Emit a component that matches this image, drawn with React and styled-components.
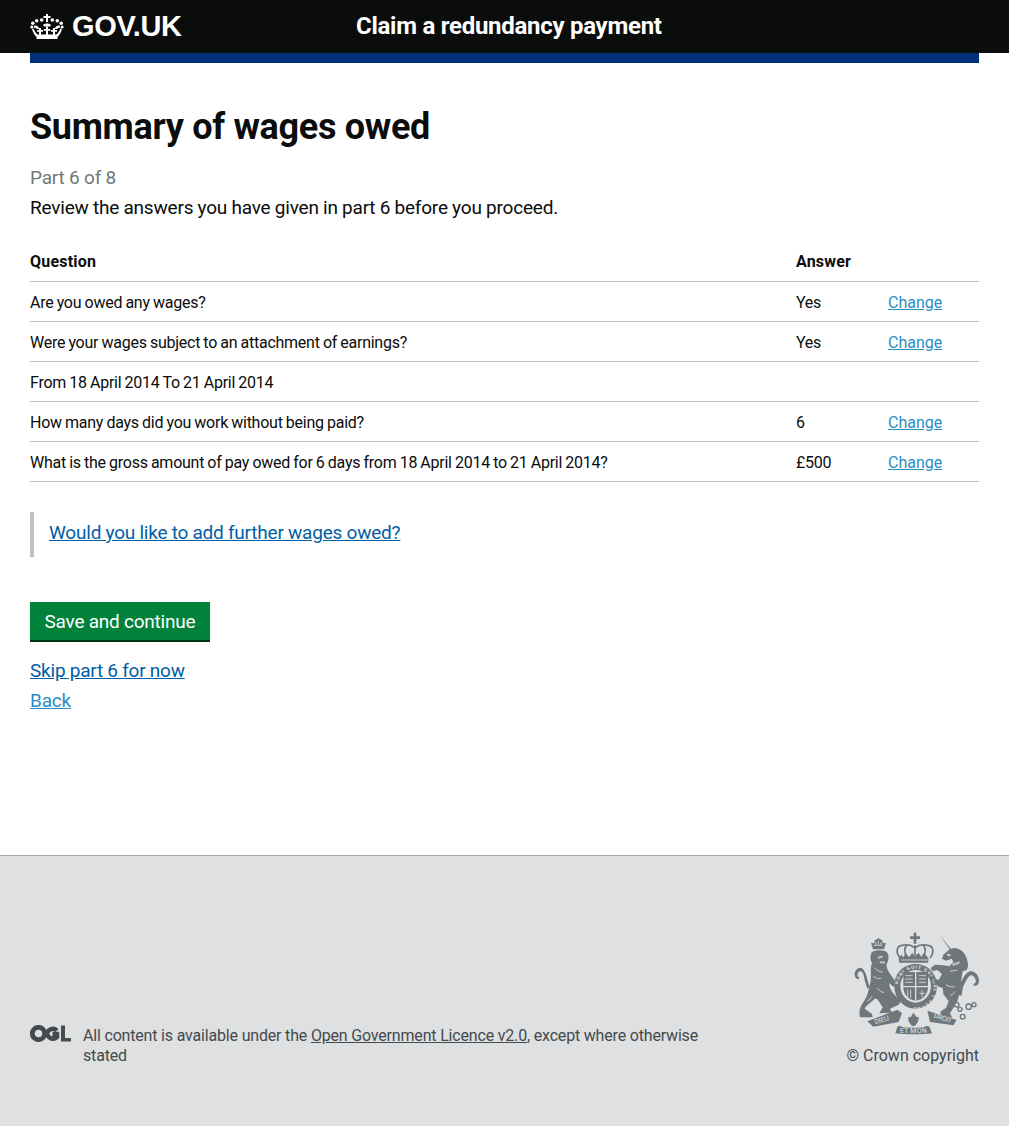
import React from 'react';
import styled, { createGlobalStyle } from 'styled-components';

const GlobalStyle = createGlobalStyle`
	html, body {
		margin: 0;
		padding: 0;
		background: #fff;
		color: #0b0c0c;
		font-family: Roboto, Arial, sans-serif;
	}
`;

const Page = styled.div`
	display: flex;
	flex-direction: column;
	height: 1126px;
`;

const Header = styled.header`
	display: flex;
	align-items: center;
	height: 53px;
	padding: 0 30px;
	background: #0b0c0c;
	color: #fff;
`;

const Logo = styled.div`
	display: flex;
	align-items: center;
	gap: 8px;
	width: 326px;
	font-family: "Liberation Sans", Arial, sans-serif;
	font-size: 29px;
	font-weight: 700;
	letter-spacing: -0.35px;
`;

const ServiceName = styled.div`
	margin-top: -2px;
	font-size: 24px;
	font-weight: 700;
	letter-spacing: -0.27px;
`;

const Main = styled.main`
	flex: 1;
	padding: 0 30px;
`;

const BlueBar = styled.div`
	height: 10px;
	background: #003078;
`;

const Title = styled.h1`
	margin: 42px 0 0;
	font-size: 36px;
	line-height: 45px;
	font-weight: 700;
	letter-spacing: -0.3px;
`;

const Part = styled.p`
	margin: 13px 0 0;
	font-size: 19px;
	line-height: 30px;
	color: #6f777b;
	letter-spacing: -0.2px;
`;

const Lede = styled.p`
	margin: 0;
	font-size: 19px;
	line-height: 30px;
	letter-spacing: -0.2px;
	word-spacing: -0.2px;
`;

const Table = styled.div`
	margin-top: 19px;
`;

const Row = styled.div`
	display: grid;
	grid-template-columns: 766px 92px 1fr;
	align-items: center;
	height: 40px;
	box-sizing: border-box;
	padding-top: 2px;
	border-bottom: 1px solid #bfc1c3;
	font-size: 16px;
	letter-spacing: -0.25px;
	word-spacing: -0.5px;
`;

const HeadRow = styled(Row)`
	padding-top: 0;
	font-weight: 700;
	letter-spacing: 0.2px;
`;

const ChangeLink = styled.a`
	color: #2b8cc4;
	text-decoration: underline;
	letter-spacing: 0;
`;

const Inset = styled.div`
	margin-top: 30px;
	padding: 5px 0 5px 15px;
	height: 35px;
	line-height: 31px;
	border-left: 4px solid #bfc1c3;
	font-size: 19px;
	letter-spacing: -0.2px;
	word-spacing: -0.2px;
`;

const PlainLink = styled.a`
	color: ${p => (p.$visited ? '#2b8cc4' : '#005ea5')};
	text-decoration: underline;
`;

const SaveButton = styled.button`
	display: block;
	margin-top: 45px;
	width: 180px;
	height: 40px;
	padding: 0;
	border: 0;
	border-bottom: 2px solid #003618;
	background: #00823b;
	color: #fff;
	font-family: inherit;
	font-size: 19px;
	letter-spacing: -0.2px;
	word-spacing: -0.2px;
`;

const LinkLine = styled.div`
	font-size: 19px;
	line-height: 30px;
	letter-spacing: -0.2px;
	word-spacing: -0.2px;
	margin-top: ${p => p.$gap || 0}px;
`;

const Footer = styled.footer`
	display: flex;
	justify-content: space-between;
	align-items: flex-end;
	height: 271px;
	box-sizing: border-box;
	padding: 0 30px 60px;
	background: #dee0e2;
	border-top: 1px solid #a1acb2;
	color: #454a4c;
	font-size: 16px;
	line-height: 20px;
`;

const Licence = styled.div`
	display: flex;
	gap: 12px;
	width: 690px;
	letter-spacing: -0.18px;
	svg {
		margin-top: -1px;
	}
`;

const LicenceText = styled.div`
	flex: 1;
	a {
		color: #454a4c;
		text-decoration: underline;
	}
`;

const Copyright = styled.div`
	display: flex;
	flex-direction: column;
	align-items: flex-end;
	gap: 11px;
`;

const CrestLabel = styled.text`
	font-family: Roboto, Arial, sans-serif;
	font-size: 21px;
	fill: #dee0e2;
`;

const RingLabel = styled.text`
	font-family: Roboto, Arial, sans-serif;
	font-size: 14px;
	font-weight: 700;
	fill: #dee0e2;
`;

const CrownIcon = () => (
	<svg width="34" height="25" viewBox="0 0 34 25" fill="#fff" aria-hidden="true">
		<path d="M16 0h2v2h2.500v2H18v4h-2V4h-2.500V2H16z" />
		<circle cx="2.800" cy="9.300" r="1.800" /><circle cx="1.800" cy="13" r="1.500" /><circle cx="6.700" cy="6.700" r="1.800" /><circle cx="11.700" cy="6" r="1.800" />
		<circle cx="31.200" cy="9.300" r="1.800" /><circle cx="32.200" cy="13" r="1.500" /><circle cx="27.300" cy="6.700" r="1.800" /><circle cx="22.300" cy="6" r="1.800" />
		<path d="M4 12c2-1 4 0 5 2l-.5 1-1.500 0C6 14 5 13.500 4 14zM30 12c-2-1-4 0-5 2l.5 1 1.500 0c1-1 2-1.500 3-1zM13 11c2-2 6-2 8 0l-1 1.500h-6z" />
		<path d="M2 15l1.500-.5C5 18 6.500 19.500 7.500 20.500L26.500 20.500C27.500 19.500 29 18 30.500 14.500L32 15c-1 4-3 6.500-4.500 8h-21C5 21.500 3 19 2 15z" />
		<path d="M6.500 23h21v2h-21z" />
		<path d="M9 14h2v2h2v1.700h-2V21H9v-3.300H7V16h2zM16 12.500h2V15h2.300v1.700H18V21h-2v-4.300h-2.300V15H16zM23 14h2v2h2v1.700h-2V21h-2v-3.300h-2V16h2z" />
	</svg>
);

const OglLogo = () => (
	<svg width="41" height="17" viewBox="0 0 41 17" aria-hidden="true">
		<circle cx="8.500" cy="8.500" r="6.200" fill="none" stroke="#454a4c" strokeWidth="4.800" />
		<path d="M27 5.500A6 6 0 0 0 17 8.500a6 6 0 0 0 10 3.500V9h-4.500" fill="none" stroke="#454a4c" strokeWidth="4.500" />
		<path d="M31 0.500h4v12.500h6v3.500H31z" fill="#454a4c" />
	</svg>
);

// traced by eye from the footer crest, coordinates are reference pixels x3
const Crest = () => (
	<svg width="125" height="103" viewBox="42 32 375 309" fill="#6f777b" aria-hidden="true">
		{/* lion crown */}
		<path d="M99 84l-6-20 9 2 3-10 9-4 1-5 2 5 9 4 3 10 9-2-6 20z" />
		<path d="M101 72h26M106 62l2 8M115 58v12M124 62l-2 8" stroke="#dee0e2" strokeWidth="2.500" />
		{/* lion */}
		<path d="M96 92C110 84 135 86 142 94 148 104 146 118 140 128 138 140 146 150 152 160L172 188 160 196 148 186C146 200 160 222 184 238L176 250 150 262 156 274 118 276 128 258C116 240 112 230 104 232 92 244 76 254 74 262L96 278 98 288 60 288C56 270 60 256 72 240 84 222 86 204 92 180 94 160 90 140 96 126 90 114 90 100 96 92z" />
		<path d="M114 108l12-4 1 3-12 4zM120 122h14v2.500h-14zM104 140c8 8 16 12 24 12M100 165c8 6 16 8 24 6M112 200c6 8 12 12 20 14M96 225c-4 6-8 10-14 16" fill="none" stroke="#dee0e2" strokeWidth="2.500" />
		{/* lion tail */}
		<path d="M90 196C80 180 82 156 68 142 58 134 44 146 44 160c0 8 6 14 12 14l2-6c-6-2-8-10-2-16 8-6 14 2 16 14 2 12 6 24 10 36z" />
		{/* royal crown */}
		<path d="M221 34h8v11h11v8h-11v14h-8V53h-11v-8h11z" />
		<path d="M180 110C166 92 170 74 186 72 202 68 216 72 225 80 234 72 248 68 264 72 280 74 284 92 270 110M225 72V104M200 72C192 82 194 96 200 106M250 72C258 82 256 96 250 106" fill="none" stroke="#6f777b" strokeWidth="5" />
		<path d="M178 124l-2-14 8-10 6 8 8-12 9 12 10-14 8 12 10-12 9 12 8-12 6 8 8 10-2 12z" />
		<path d="M184 116h82" stroke="#dee0e2" strokeWidth="2.500" />
		{/* garter ring */}
		<path fillRule="evenodd" d="M227 128c36 0 64 28 64 66s-28 68-64 68-64-30-64-68 28-66 64-66zM227 146c-25 0-46 21-46 48s21 50 46 50 46-23 46-50-21-48-46-48z" />
		<path id="garter" d="M173 200A54 58 0 1 1 281 200A54 58 0 1 1 173 200" fill="none" />
		<RingLabel letterSpacing="3"><textPath href="#garter" startOffset="3%">HONI SOIT QUI MAL Y PENSE</textPath></RingLabel>
		{/* shield */}
		<path d="M190 152h35v42h-35zM229 152h35v42h-35zM190 198h35v40c-20-2-35-20-35-40zM229 198h35c0 20-15 38-35 40z" />
		<path d="M196 163h22M196 173h22M196 183h22M236 163h22M236 173h22M236 183h22M203 204v24M212 204v26M238 216h18M246 206v22" stroke="#dee0e2" strokeWidth="2.500" />
		{/* unicorn */}
		<path d="M300 42L332 82 345 80C362 82 378 96 382 118 386 130 384 140 380 146L368 150 364 176 362 205 352 240 330 276 338 292 300 290 302 270 318 260 326 240 310 218 308 200 296 196 278 178 286 172 296 176 306 158 292 146 278 150 272 140 285 130 310 132 328 135 340 122 335 112 318 118 306 112 310 100 329 84z" />
		<path d="M322 98l8 2 1 4-9-2zM338 128l20-6-1 4-18 6zM330 150l22-4M318 190c8 6 16 8 26 6M330 222c6-2 12-6 16-12" fill="none" stroke="#dee0e2" strokeWidth="2.500" />
		{/* unicorn tail */}
		<path d="M360 188c10-18 20-42 36-38 14 4 24 18 20 34-2 8-10 12-16 8l2-6c8 2 8-16-6-24-10-4-16 14-24 28-6 10-4 22-8 34l-8-4c0-14 0-22 4-32z" />
		{/* chain */}
		<g fill="none" stroke="#6f777b" strokeWidth="4">
			<circle cx="350" cy="250" r="7" />
			<circle cx="360" cy="264" r="6" />
			<circle cx="386" cy="256" r="8" />
			<circle cx="402" cy="250" r="6" />
			<circle cx="368" cy="286" r="7" />
		</g>
		{/* motto ribbons */}
		<path d="M82 300L172 265 186 275 176 302 100 316z" />
		<path d="M172 316c6-4 12-2 16 2 16 2 46 2 64 0 4-4 10-6 16-2l8 20c-30 4-80 4-110 0z" />
		<path d="M262 268L350 296 340 312 270 302z" />
		<path d="M220 274l10 14 6-2c2 10-4 20-12 28h-8c-8-8-14-18-10-28l6 2z" />
		<CrestLabel x="106" y="309" transform="rotate(-16 106 309)" textLength="44">DIEU</CrestLabel>
		<CrestLabel x="180" y="334" textLength="80">ET MON</CrestLabel>
		<CrestLabel x="280" y="288" transform="rotate(18 280 288)" textLength="56">DROIT</CrestLabel>
	</svg>
);

export default function App() {
	return (
		<Page>
			<GlobalStyle />
			<Header>
				<Logo><CrownIcon />GOV.UK</Logo>
				<ServiceName>Claim a redundancy payment</ServiceName>
			</Header>
			<Main>
				<BlueBar />
				<Title>Summary of wages owed</Title>
				<Part>Part 6 of 8</Part>
				<Lede>Review the answers you have given in part 6 before you proceed.</Lede>
				<Table>
					<HeadRow><span>Question</span><span>Answer</span><span /></HeadRow>
					<Row><span>Are you owed any wages?</span><span>Yes</span><ChangeLink href="#">Change</ChangeLink></Row>
					<Row><span>Were your wages subject to an attachment of earnings?</span><span>Yes</span><ChangeLink href="#">Change</ChangeLink></Row>
					<Row><span>From 18 April 2014 To 21 April 2014</span><span /><span /></Row>
					<Row><span>How many days did you work without being paid?</span><span>6</span><ChangeLink href="#">Change</ChangeLink></Row>
					<Row><span>What is the gross amount of pay owed for 6 days from 18 April 2014 to 21 April 2014?</span><span>£500</span><ChangeLink href="#">Change</ChangeLink></Row>
				</Table>
				<Inset><PlainLink href="#">Would you like to add further wages owed?</PlainLink></Inset>
				<SaveButton>Save and continue</SaveButton>
				<LinkLine $gap={14}><PlainLink href="#">Skip part 6 for now</PlainLink></LinkLine>
				<LinkLine><PlainLink href="#" $visited>Back</PlainLink></LinkLine>
			</Main>
			<Footer>
				<Licence>
					<OglLogo />
					<LicenceText>
						All content is available under the <a href="#">Open Government Licence v2.0</a>, except where otherwise stated
					</LicenceText>
				</Licence>
				<Copyright>
					<Crest />
					<span>© Crown copyright</span>
				</Copyright>
			</Footer>
		</Page>
	);
}
